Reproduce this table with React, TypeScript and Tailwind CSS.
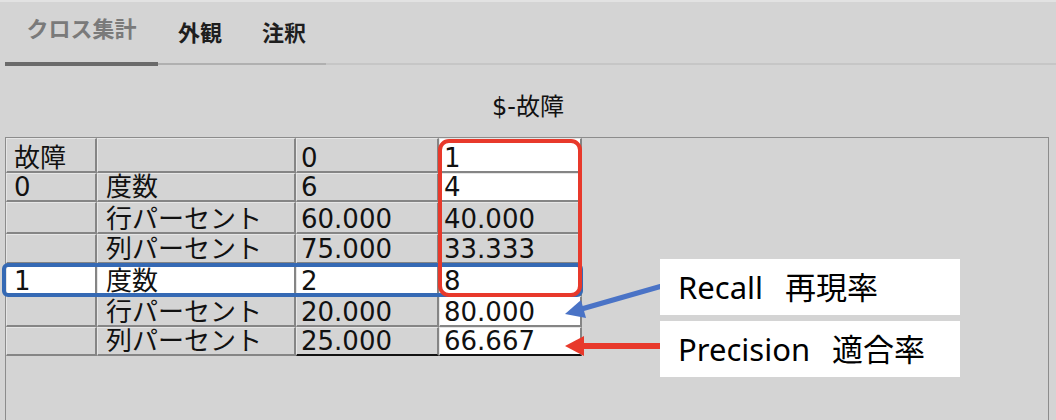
import React from "react";

type Cell = { t: string; white?: boolean; black?: boolean };
type Row = { h: string; cells: Cell[] };

const widths = ["w-[91px]", "w-[199px]", "w-[143px]", "w-[143px]"];
const pads = ["pl-[7px]", "pl-[8px]", "pl-[4px]", "pl-[4px]"];

const rows: Row[] = [
  { h: "h-[35px]", cells: [{ t: "故障" }, { t: "" }, { t: "0" }, { t: "1", white: true }] },
  { h: "h-[29px]", cells: [{ t: "0" }, { t: "度数" }, { t: "6" }, { t: "4", white: true }] },
  { h: "h-[32px]", cells: [{ t: "" }, { t: "行パーセント" }, { t: "60.000" }, { t: "40.000" }] },
  { h: "h-[30px]", cells: [{ t: "" }, { t: "列パーセント" }, { t: "75.000" }, { t: "33.333" }] },
  {
    h: "h-[32px]",
    cells: [
      { t: "1", white: true },
      { t: "度数", white: true },
      { t: "2", white: true },
      { t: "8", white: true },
    ],
  },
  { h: "h-[31px]", cells: [{ t: "" }, { t: "行パーセント" }, { t: "20.000" }, { t: "80.000", white: true }] },
  {
    h: "h-[29px]",
    cells: [{ t: "" }, { t: "列パーセント" }, { t: "25.000", black: true }, { t: "66.667", white: true, black: true }],
  },
];

export default function App() {
  return (
    <div
      className="relative w-[1056px] h-[420px] overflow-hidden bg-[#d4d4d4] text-[#111]"
      style={{ fontFamily: "'DejaVu Sans', 'Noto Sans CJK JP', sans-serif" }}
    >
      <div className="h-[2px] bg-[#e2e2e2]" />
      {/* Tabs */}
      <div
        className="flex items-start h-[64px]"
        style={{ fontFamily: "'Noto Sans CJK JP', sans-serif" }}
      >
        <div className="w-[5px] h-[64px]" />
        <div className="w-[153px] h-[64px] flex items-start justify-center pt-[14px] border-b-4 border-[#6a6a6a] text-[22px] font-bold text-[#7a7a7a] leading-none">
          クロス集計
        </div>
        <div className="w-[84px] h-[63px] flex items-start justify-center pt-[18px] border-b-2 border-[#b0b0b0] text-[22px] font-bold text-[#1e1e1e] leading-none">
          外観
        </div>
        <div className="w-[84px] h-[63px] flex items-start justify-center pt-[18px] border-b-2 border-[#b0b0b0] text-[22px] font-bold text-[#1e1e1e] leading-none">
          注釈
        </div>
        <div className="flex-1 h-[63px] border-b-2 border-[#c6c6c6]" />
      </div>
      {/* Title */}
      <div className="h-[71px] flex items-center justify-center pt-[10px] text-[24px] leading-none">
        $-故障
      </div>
      {/* Panel */}
      <div className="ml-[5px] w-[1044px] h-[283px] border-t border-l border-r border-[#8c8c8c]">
        <div className="flex flex-col">
          {rows.map((r, i) => (
            <div key={i} className={`flex ${r.h}`}>
              {r.cells.map((c, j) => (
                <div
                  key={j}
                  className={`${widths[j]} ${pads[j]} h-full flex items-end pb-[0px] border-r-2 border-b-2 border-t border-l border-t-[#e6e6e6] border-l-[#e6e6e6] border-r-[#858585] ${
                    c.black ? "border-b-[#111]" : "border-b-[#858585]"
                  } ${c.white ? "bg-white" : "bg-[#d4d4d4]"} text-[26px] leading-none whitespace-nowrap`}
                >
                  {c.t}
                </div>
              ))}
            </div>
          ))}
        </div>
      </div>

      {/* Highlight boxes */}
      <div className="absolute left-[2px] top-[263px] w-[581px] h-[34px] border-4 border-[#3569b4] rounded-[6px]" />
      <div className="absolute left-[438px] top-[139px] w-[144px] h-[158px] border-[4px] border-[#e8392b] rounded-[11px]" />

      {/* Arrows */}
      <svg className="absolute left-0 top-0" width="1056" height="420">
        <line x1="662" y1="286" x2="578" y2="310" stroke="#4a73c6" strokeWidth="5" />
        <polygon points="565,314 581,300 586,318" fill="#4a73c6" />
        <line x1="662" y1="346" x2="580" y2="346" stroke="#e8392b" strokeWidth="6" />
        <polygon points="565,346 584,336 584,356" fill="#e8392b" />
      </svg>

      {/* Annotation labels */}
      <div
        className="absolute left-[660px] top-[259px] w-[300px] h-[56px] bg-white flex items-center pl-[18px] text-[31px] leading-none text-black"
        style={{ fontFamily: "'Noto Sans', 'Noto Sans CJK JP', sans-serif" }}
      >
        <span>Recall</span>
        <span className="ml-[22px]">再現率</span>
      </div>
      <div
        className="absolute left-[660px] top-[321px] w-[300px] h-[56px] bg-white flex items-center pl-[18px] text-[31px] leading-none text-black"
        style={{ fontFamily: "'Noto Sans', 'Noto Sans CJK JP', sans-serif" }}
      >
        <span>Precision</span>
        <span className="ml-[22px]">適合率</span>
      </div>
    </div>
  );
}
